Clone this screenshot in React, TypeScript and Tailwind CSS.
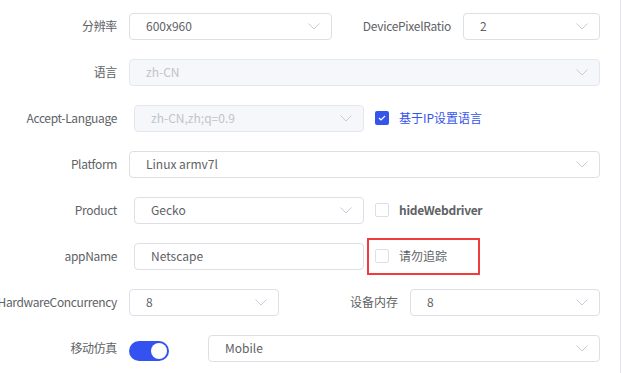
const font = { fontFamily: '"Noto Sans CJK SC", "Noto Sans", sans-serif' }

function Chevron() {
    return (
        <svg width="12" height="7" viewBox="0 0 12 7" className="shrink-0">
            <path d="M0.5 0.5L6 6L11.5 0.5" fill="none" stroke="#c8cbd2" strokeWidth="1" />
        </svg>
    )
}

function Select({ value, className, disabled, arrow = true }: { value: string; className: string; disabled?: boolean; arrow?: boolean }) {
    return (
        <div
            className={`h-[27px] rounded-[4px] border flex items-center justify-between pl-4 pr-[11px] ${disabled
                ? 'bg-[#f5f7fa] border-[#e4e7ed] text-[#c0c4cc]'
                : 'bg-white border-[#dcdfe6] text-[#606266]'
                } ${className}`}
        >
            <span>{value}</span>
            {arrow && <Chevron />}
        </div>
    )
}

function Checkbox({ checked }: { checked?: boolean }) {
    return checked ? (
        <span className="w-[14px] h-[14px] rounded-[2px] bg-[#3554ea] flex items-center justify-center">
            <svg width="8" height="6" viewBox="0 0 8 6">
                <path d="M1 3l2 2 4-4" fill="none" stroke="white" strokeWidth="1.2" />
            </svg>
        </span>
    ) : (
        <span className="w-[14px] h-[14px] rounded-[2px] border border-[#dcdfe6] bg-white" />
    )
}

function Label({ text }: { text: string }) {
    return <div className="w-[117px] shrink-0 flex justify-end whitespace-nowrap tracking-[-0.35px]">{text}</div>
}

export default function App() {
    return (
        <div style={font} className="w-[621px] h-[373px] border-r border-[#e4e7ed] bg-white text-[12px] text-[#606266] pt-3 overflow-hidden">
            {/* 分辨率 / DevicePixelRatio */}
            <div className="flex items-center h-[28px] mb-[18px]">
                <Label text="分辨率" />
                <Select value="600x960" className="ml-3 w-[203px]" />
                <div className="w-[119px] flex justify-end tracking-[-0.3px]">DevicePixelRatio</div>
                <Select value="2" className="ml-3 w-[137px]" />
            </div>

            {/* 语言 */}
            <div className="flex items-center h-[28px] mb-[18px]">
                <Label text="语言" />
                <Select value="zh-CN" disabled className="ml-3 w-[471px]" />
            </div>

            {/* Accept-Language */}
            <div className="flex items-center h-[28px] mb-[18px]">
                <Label text="Accept-Language" />
                <Select value="zh-CN,zh;q=0.9" disabled className="ml-[17px] w-[230px]" />
                <div className="ml-[11px] flex items-center gap-[10px] text-[#3554ea]">
                    <Checkbox checked />
                    <span>基于IP设置语言</span>
                </div>
            </div>

            {/* Platform */}
            <div className="flex items-center h-[28px] mb-[18px]">
                <Label text="Platform" />
                <Select value="Linux armv7l" className="ml-3 w-[471px]" />
            </div>

            {/* Product */}
            <div className="flex items-center h-[28px] mb-[18px]">
                <Label text="Product" />
                <Select value="Gecko" className="ml-[17px] w-[230px]" />
                <div className="ml-[11px] flex items-center gap-[10px] font-semibold tracking-[-0.3px]">
                    <Checkbox />
                    <span>hideWebdriver</span>
                </div>
            </div>

            {/* appName */}
            <div className="flex items-center h-[28px] mb-[18px]">
                <Label text="appName" />
                <Select value="Netscape" arrow={false} className="ml-[17px] w-[230px]" />
                <div className="ml-[3px] w-[113px] h-[37px] shrink-0 border-2 border-[#f43b3b] flex items-center gap-[10px] pl-[6px]">
                    <Checkbox />
                    <span>请勿追踪</span>
                </div>
            </div>

            {/* HardwareConcurrency / 设备内存 */}
            <div className="flex items-center h-[28px] mb-[18px]">
                <Label text="HardwareConcurrency" />
                <Select value="8" className="ml-3 w-[150px]" />
                <div className="w-[119px] flex justify-end">设备内存</div>
                <Select value="8" className="ml-3 w-[190px]" />
            </div>

            {/* 移动仿真 */}
            <div className="flex items-center h-[28px]">
                <Label text="移动仿真" />
                <div className="ml-3 w-10 h-5 rounded-full bg-[#3352ef] flex items-center justify-end pr-[2px] mt-[5px]">
                    <span className="w-4 h-4 rounded-full bg-white" />
                </div>
                <Select value="Mobile" className="ml-[39px] w-[392px] border-[#c8cad0]" />
            </div>
        </div>
    )
}
